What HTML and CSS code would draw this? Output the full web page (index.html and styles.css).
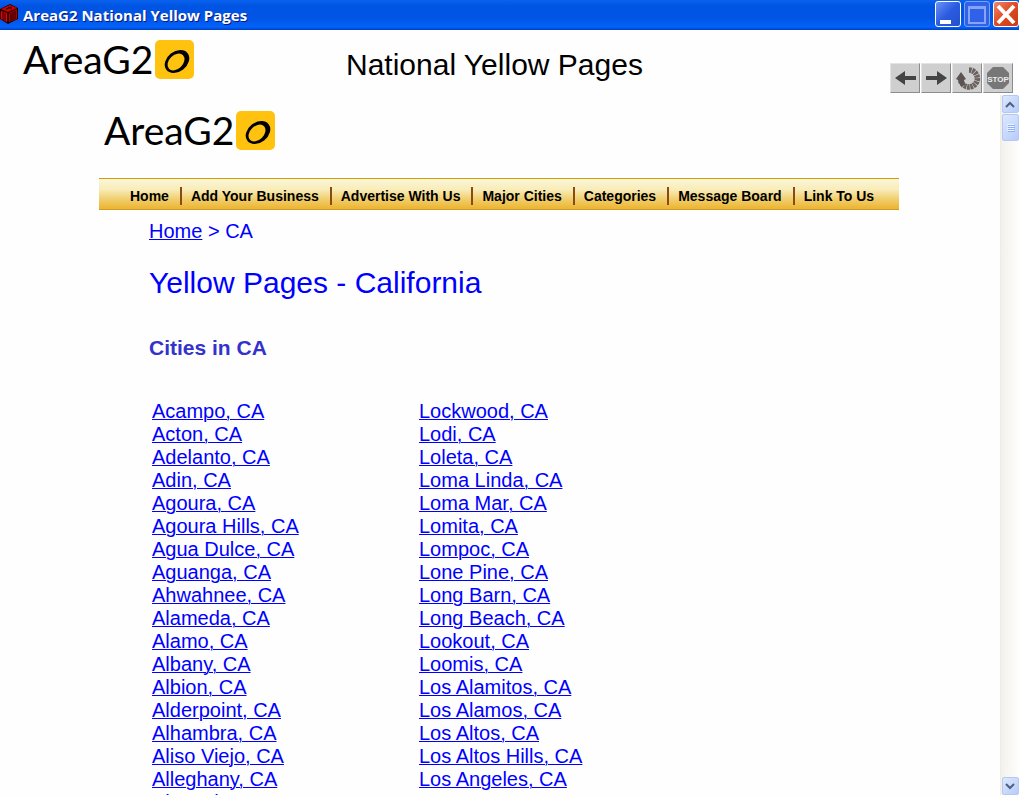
FILE: index.html
```html
<!DOCTYPE html>
<html lang="en">
<head>
    <meta charset="UTF-8">
    <meta name="viewport" content="width=device-width, initial-scale=1.0">
    <title>AreaG2 National Yellow Pages</title>
    <link rel="stylesheet" href="styles.css">
</head>
<body>
    <div class="titlebar">
        <svg class="app-icon" viewBox="0 0 18 20" width="18" height="20">
            <path d="M0 5 L10 0 L18 4 L18 15 L8 20 L0 15Z" fill="#200"/>
            <path d="M1 5 L10 1 L17 4 L8 8Z" fill="#c00"/>
            <path d="M1 7 L7 9 V18 L1 15Z" fill="#e00"/>
            <path d="M9 9 L17 5 V15 L9 18Z" fill="#a00"/>
            <path d="M3 8v8M5 9v8M11 9v8M13 8v8M15 7v8M6 5l6-2M8 3l4 2" stroke="#200" stroke-width="1"/>
        </svg>
        <span class="title">AreaG2 National Yellow Pages</span>
        <button class="win" aria-label="Minimize">
            <svg viewBox="0 0 24 24" width="24" height="24"><path d="M4 18h11v4H4z" fill="#fff"/></svg>
        </button>
        <button class="win off" aria-label="Maximize">
            <svg viewBox="0 0 24 24" width="24" height="24"><path d="M4 5h16v16H4z" fill="none" stroke="#87a3f5" stroke-width="2"/><path d="M3 4h18v3H3z" fill="#87a3f5"/></svg>
        </button>
        <button class="win close" aria-label="Close">
            <svg viewBox="0 0 24 24" width="24" height="24"><path d="M4 4l16 17M20 4L4 21" stroke="#fff" stroke-width="4"/></svg>
        </button>
    </div>

    <div class="header">
        <div class="logo">
            <span>AreaG2</span>
            <svg viewBox="0 0 39 39" width="39" height="39"><rect width="39" height="39" rx="5" fill="#ffc20e"/><ellipse cx="22" cy="21.500" rx="13.500" ry="10" transform="rotate(-38 22 21.5)"/><ellipse cx="21" cy="22" rx="9.800" ry="6.800" transform="rotate(-44 21 22)" fill="#ffc20e"/></svg>
        </div>
        <div class="heading">National Yellow Pages</div>
        <div class="tools">
            <button aria-label="Back"><svg viewBox="0 0 30 30" width="30" height="30"><path d="M5 15l10-7v5h11v4H15v5z" fill="#444"/></svg></button>
            <button aria-label="Forward"><svg viewBox="0 0 30 30" width="30" height="30"><path d="M26 15l-10-7v5H5v4h11v5z" fill="#444"/></svg></button>
            <button aria-label="Reload"><svg viewBox="0 0 30 30" width="30" height="30"><path d="M17 7A8.500 8.500 0 1 1 8.500 17" fill="none" stroke="#6a625e" stroke-width="5.500" stroke-dasharray="2.600 .6"/><path d="M4 16l5-7 5 7-2 1 1 5-4 1-3-6z" fill="#5c5450"/></svg></button>
            <button aria-label="Stop"><svg viewBox="0 0 30 30" width="30" height="30"><path d="M10 4h10l6 6v10l-6 6H10l-6-6V10z" fill="#777"/><text x="15" y="19" class="stop">STOP</text></svg></button>
        </div>
    </div>

    <div class="viewer">
        <div class="page">
            <div class="logo">
                <span>AreaG2</span>
                <svg viewBox="0 0 39 39" width="39" height="39"><rect width="39" height="39" rx="5" fill="#ffc20e"/><ellipse cx="22" cy="21.500" rx="13.500" ry="10" transform="rotate(-38 22 21.5)"/><ellipse cx="21" cy="22" rx="9.800" ry="6.800" transform="rotate(-44 21 22)" fill="#ffc20e"/></svg>
            </div>
            <nav>
                <a href="#">Home</a>
                <a href="#">Add Your Business</a>
                <a href="#">Advertise With Us</a>
                <a href="#">Major Cities</a>
                <a href="#">Categories</a>
                <a href="#">Message Board</a>
                <a href="#">Link To Us</a>
            </nav>
            <div class="content">
                <div class="crumbs"><a href="#">Home</a> &gt; CA</div>
                <h1>Yellow Pages - California</h1>
                <h2>Cities in CA</h2>
                <div class="cities">
                    <ul>
                        <li><a href="#">Acampo, CA</a></li>
                        <li><a href="#">Acton, CA</a></li>
                        <li><a href="#">Adelanto, CA</a></li>
                        <li><a href="#">Adin, CA</a></li>
                        <li><a href="#">Agoura, CA</a></li>
                        <li><a href="#">Agoura Hills, CA</a></li>
                        <li><a href="#">Agua Dulce, CA</a></li>
                        <li><a href="#">Aguanga, CA</a></li>
                        <li><a href="#">Ahwahnee, CA</a></li>
                        <li><a href="#">Alameda, CA</a></li>
                        <li><a href="#">Alamo, CA</a></li>
                        <li><a href="#">Albany, CA</a></li>
                        <li><a href="#">Albion, CA</a></li>
                        <li><a href="#">Alderpoint, CA</a></li>
                        <li><a href="#">Alhambra, CA</a></li>
                        <li><a href="#">Aliso Viejo, CA</a></li>
                        <li><a href="#">Alleghany, CA</a></li>
                        <li><a href="#">Alpaugh, CA</a></li>
                    </ul>
                    <ul>
                        <li><a href="#">Lockwood, CA</a></li>
                        <li><a href="#">Lodi, CA</a></li>
                        <li><a href="#">Loleta, CA</a></li>
                        <li><a href="#">Loma Linda, CA</a></li>
                        <li><a href="#">Loma Mar, CA</a></li>
                        <li><a href="#">Lomita, CA</a></li>
                        <li><a href="#">Lompoc, CA</a></li>
                        <li><a href="#">Lone Pine, CA</a></li>
                        <li><a href="#">Long Barn, CA</a></li>
                        <li><a href="#">Long Beach, CA</a></li>
                        <li><a href="#">Lookout, CA</a></li>
                        <li><a href="#">Loomis, CA</a></li>
                        <li><a href="#">Los Alamitos, CA</a></li>
                        <li><a href="#">Los Alamos, CA</a></li>
                        <li><a href="#">Los Altos, CA</a></li>
                        <li><a href="#">Los Altos Hills, CA</a></li>
                        <li><a href="#">Los Angeles, CA</a></li>
                        <li><a href="#">Los Banos, CA</a></li>
                    </ul>
                </div>
            </div>
        </div>
        <div class="scrollbar">
            <button aria-label="Scroll up"><svg viewBox="0 0 17 17" width="17" height="17"><path d="M4 11l4-4 4 4" fill="none" stroke="#4d6185" stroke-width="2"/></svg></button>
            <div class="thumb"><svg viewBox="0 0 8 8" width="8" height="8"><path d="M0 0h7M0 2h7M0 4h7M0 6h7" stroke="#eef4fe" transform="translate(0 .5)"/><path d="M1 1h7M1 3h7M1 5h7M1 7h7" stroke="#8cb0f8" transform="translate(0 .5)"/></svg></div>
            <button class="down" aria-label="Scroll down"><svg viewBox="0 0 17 17" width="17" height="17"><path d="M4 6l4 4 4-4" fill="none" stroke="#4d6185" stroke-width="2"/></svg></button>
        </div>
    </div>
</body>
</html>
```
FILE: styles.css
```css
* { box-sizing: border-box; }
body { margin: 0; height: 100vh; display: flex; flex-direction: column; overflow: hidden; background: #fefefe; font-family: "Liberation Sans", Arial, sans-serif; font-size: 20px; line-height: 23px; }
button { padding: 0; border: 0; cursor: pointer; }
svg { display: block; }

.titlebar { flex: none; height: 30px; display: flex; align-items: center; gap: 3px; background: linear-gradient(#0a62ee, #0054e3 20%, #0055e5 60%, #0262fb 90%, #0040c8); }
.app-icon { margin: 0 2px 3px 0; }
.title { flex: 1; color: #fff; font-family: "Open Sans", sans-serif; font-size: 15px; font-weight: bold; text-shadow: 1px 1px #0a1883; }
.win { width: 26px; height: 26px; margin-bottom: 3px; border: 1px solid #fff; border-radius: 3px; background: linear-gradient(135deg, #6c93f5, #2b5be0 50%, #2450c8); }
.off { border-color: #7f9ff2; background: #2f62e8; }
.close { background: linear-gradient(135deg, #ee8a6c, #dd4a22 50%, #c83a14); }

.header { flex: none; height: 65px; display: flex; padding: 0 6px 0 23px; }
.logo { display: flex; gap: 5px; }
.logo span { width: 127px; font-family: Lato, sans-serif; font-size: 39px; line-height: 39px; white-space: nowrap; }
.header .logo { height: 39px; margin-top: 10px; }
.heading { flex: 1; margin: 17px 0 0 152px; font-size: 30px; line-height: 36px; }
.tools { display: flex; gap: 1px; margin-top: 33px; }
.tools button { width: 30px; height: 30px; background: #cfcfcf; border: 1px solid; border-color: #e4e4e4 #8c8c8c #8c8c8c #e4e4e4; }
.tools svg { margin: -1px; }
.stop { fill: #eee; font-family: "Liberation Sans Narrow", "Liberation Sans", sans-serif; font-size: 8px; font-weight: bold; text-anchor: middle; }

.viewer { flex: 1; min-height: 0; display: flex; margin-bottom: 3px; overflow: hidden; }
.page { flex: 1; padding: 16px 101px 0 99px; }
.page .logo { margin: 0 0 28px 5px; }
nav { display: flex; align-items: center; height: 32px; padding: 3px 0 0 21px; border-top: 1px solid #d0a000; border-bottom: 1px solid #d09a20; background: linear-gradient(#fcf6da, #f8ecb8 35%, #f0cc68 70%, #ecb430); }
nav a { padding: 0 11px 0 9px; border-left: 2px solid #8a4a10; color: #000; font-size: 14px; font-weight: bold; line-height: 18px; text-decoration: none; white-space: nowrap; }
nav a:first-child { padding-left: 10px; border-left: 0; }
.content { padding: 10px 0 0 50px; color: #00f; }
.content a { color: #00f; text-decoration-thickness: 1px; }
h1 { margin: 22px 0 0; font-size: 30px; line-height: 36px; font-weight: normal; }
h2 { margin: 34px 0 40px; font-size: 21px; line-height: 25px; color: #33c; }
.cities { display: flex; padding-left: 3px; }
.cities ul { width: 267px; margin: 0; padding: 0; list-style: none; }

.scrollbar { flex: none; width: 19px; display: flex; flex-direction: column; gap: 1px; padding-left: 1px; border-left: 1px solid #eeede5; background: linear-gradient(90deg, #f3f1ec, #fefefb); }
.scrollbar button, .thumb { width: 17px; height: 18px; background: linear-gradient(135deg, #dce8ff, #b8ccf8); border: 1px solid #b4c8f6; border-radius: 2px; }
.scrollbar button svg { margin: -1px; }
.scrollbar .thumb { height: 27px; display: flex; align-items: center; justify-content: center; }
.scrollbar .down { margin-top: auto; }
```
